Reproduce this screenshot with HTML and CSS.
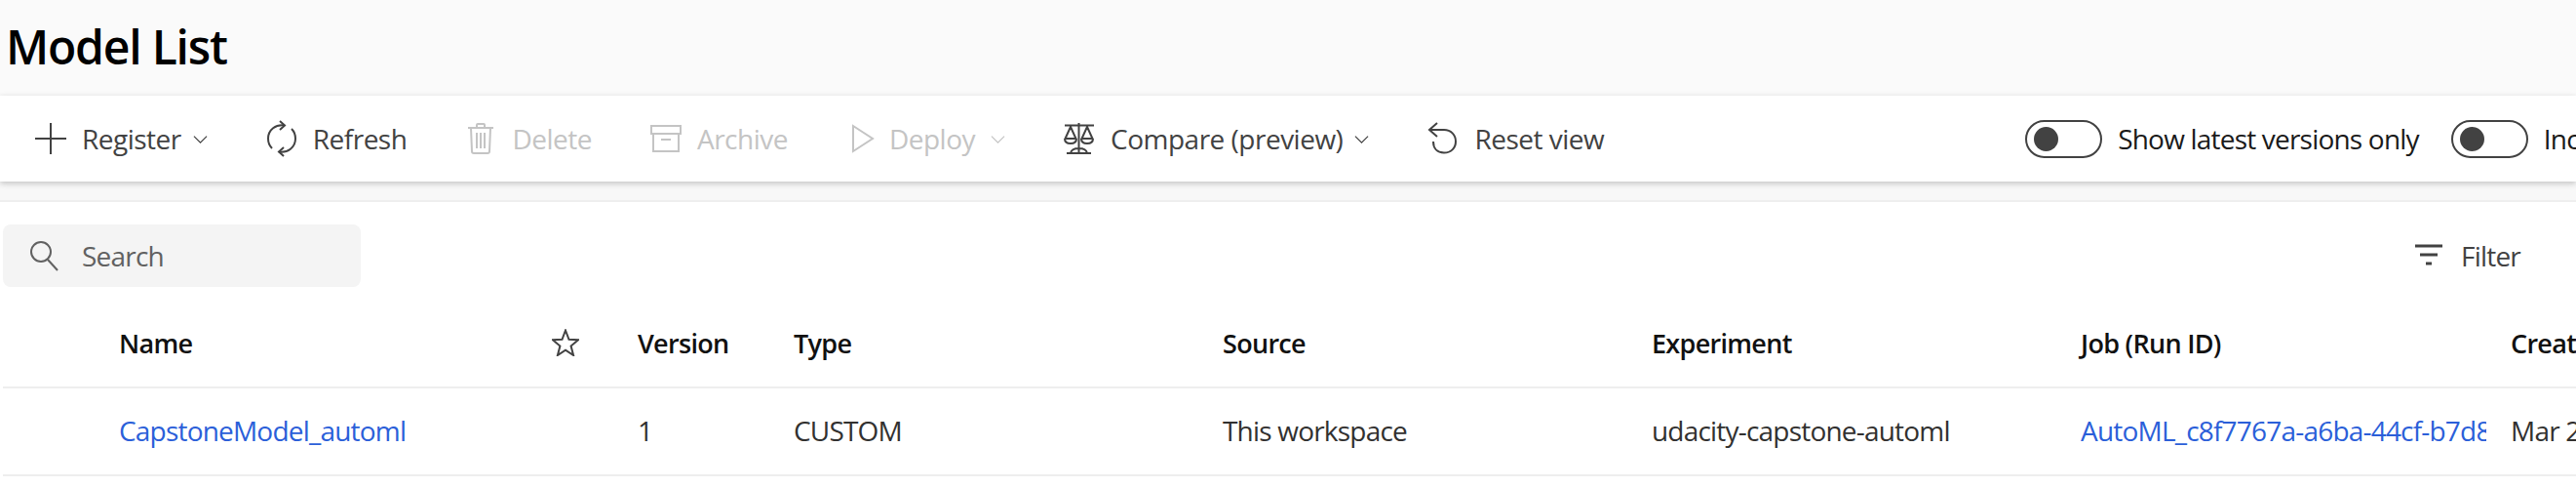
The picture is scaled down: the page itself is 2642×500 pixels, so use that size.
FILE: index.html
```html
<!DOCTYPE html>
<html lang="en">

<head>
  <meta charset="UTF-8">
  <title>Model List</title>
  <link rel="stylesheet" href="styles.css">
</head>

<body>
  <!-- Page title -->
  <div class="page-header">
    <h1 class="page-title">Model List</h1>
  </div>

  <!-- Command bar -->
  <div class="toolbar">
    <button class="tool-btn">
      <svg class="icon" viewBox="0 0 32 32"><path d="M16 0v32M0 16h32"/></svg>
      <span>Register</span>
      <svg class="chevron" viewBox="0 0 16 16"><path d="M1 5l7 7 7-7"/></svg>
    </button>
    <button class="tool-btn">
      <svg class="icon icon-tall" viewBox="0 0 32 38"><path d="M19 5.500C10 4 2 10 2 19c0 4 1.500 7.500 4 10"/><path d="M13 32.500C22 34 30 28 30 19c0-4-1.500-7.500-4-10"/><path d="M14 1l5 4.500-5 4.500M18 28l-5 4.500 5 4.500"/></svg>
      <span>Refresh</span>
    </button>
    <button class="tool-btn disabled">
      <svg class="icon" viewBox="0 0 32 32"><path d="M3 5h26M6 5l1 24q0 2 2 2h14q2 0 2-2l1-24M12 5V2q0-1 1-1h6q1 0 1 1v3M12 10v16M16 10v16M20 10v16"/></svg>
      <span>Delete</span>
    </button>
    <button class="tool-btn disabled">
      <svg class="icon" viewBox="0 0 32 32"><path d="M1 3h30v8H1zM3 11v18h26V11M11 17h10"/></svg>
      <span>Archive</span>
    </button>
    <button class="tool-btn disabled tight">
      <svg class="icon" viewBox="0 0 32 32"><path d="M7 3v26l20-13z"/></svg>
      <span>Deploy</span>
      <svg class="chevron" viewBox="0 0 16 16"><path d="M1 5l7 7 7-7"/></svg>
    </button>
    <button class="tool-btn">
      <svg class="icon" viewBox="0 0 32 32"><path d="M1 2.500h30M15.500 0v31M3 31h25M7 31q1-5 8.500-5t8.500 5M7 4L1.500 16h11zM24 4l-5.500 12h11zM1 16q0 5 6 5t6-5M18 16q0 5 6 5t6-5"/></svg>
      <span>Compare (preview)</span>
      <svg class="chevron" viewBox="0 0 16 16"><path d="M1 5l7 7 7-7"/></svg>
    </button>
    <button class="tool-btn">
      <svg class="icon" viewBox="0 0 32 32"><path d="M2 7h15c7 0 12 5 12 12s-5 11.500-12 11.500S6 26 6 19M10 0L2 7l8 7"/></svg>
      <span>Reset view</span>
    </button>

    <label class="toggle toggle-first"><span class="toggle-track"><span class="toggle-thumb"></span></span>Show latest versions only</label>
    <label class="toggle"><span class="toggle-track"><span class="toggle-thumb"></span></span>Include archived</label>
  </div>
  <div class="toolbar-gap"></div>

  <!-- Search + filter -->
  <div class="search-row">
    <div class="search-box">
      <svg class="search-icon" viewBox="0 0 32 32"><circle cx="13" cy="12" r="10"/><path d="M20 20l10 11"/></svg>
      <span>Search</span>
    </div>
    <div class="filter-btn">
      <svg class="filter-icon" viewBox="0 0 28 24"><path d="M0 2h28M5 11h18M11 20h6"/></svg>
      <span>Filter</span>
    </div>
  </div>

  <!-- Models table -->
  <div class="grid-row grid-head">
    <div class="cell cell-name">Name</div>
    <div class="cell"><svg class="star-icon" viewBox="0 0 28 28"><path d="M14 1.500l3.500 9.300 9.500.5-7.400 6.200 2.500 9.500-8.100-5.400-8.100 5.400 2.500-9.500L1 11.300l9.500-.5z"/></svg></div>
    <div class="cell">Version</div>
    <div class="cell">Type</div>
    <div class="cell">Source</div>
    <div class="cell">Experiment</div>
    <div class="cell">Job (Run ID)</div>
    <div class="cell">Created on</div>
  </div>
  <div class="grid-row">
    <div class="cell cell-name"><a class="link">CapstoneModel_automl</a></div>
    <div class="cell"></div>
    <div class="cell">1</div>
    <div class="cell">CUSTOM</div>
    <div class="cell">This workspace</div>
    <div class="cell">udacity-capstone-automl</div>
    <div class="cell"><a class="link link-clip">AutoML_c8f7767a-a6ba-44cf-b7d8-1f3e2a90</a></div>
    <div class="cell">Mar 2, 2023</div>
  </div>
</body>

</html>
```
FILE: styles.css
```css
/* General */
html,
body {
  margin: 0;
  padding: 0;
  height: 500px;
  overflow: hidden;
  background-color: white;
}

body {
  width: 2642px;
  font-family: "Open Sans", "Liberation Sans", sans-serif;
  font-size: 28px;
  letter-spacing: -0.8px;
  color: #323130;
}

/* Title */
.page-header {
  height: 98px;
  background-color: #fafafa;
  display: flex;
  align-items: center;
}

.page-title {
  margin: 0 0 4px 6px;
  font-size: 48px;
  font-weight: 600;
  letter-spacing: -1.2px;
  color: black;
}

/* Toolbar */
.toolbar {
  height: 88px;
  display: flex;
  align-items: center;
  gap: 60px;
  padding-left: 36px;
  background-color: white;
  box-shadow: 0 2px 6px rgba(0, 0, 0, 0.22);
  position: relative;
  white-space: nowrap;
}

.toolbar-gap {
  height: 19px;
  background-color: #f8f8f8;
  border-bottom: 2px solid #eeeeee;
}

.tool-btn {
  display: flex;
  align-items: center;
  gap: 16px;
  padding: 0;
  border: none;
  background: none;
  font: inherit;
  letter-spacing: -0.5px;
  font-weight: 500;
  color: #424242;
}

.tool-btn.disabled {
  color: #c4c4c4;
}

.tool-btn.tight {
  gap: 12px;
}

.icon {
  width: 32px;
  height: 32px;
  fill: none;
  stroke: currentColor;
  stroke-width: 2;
  overflow: visible;
}

.icon-tall {
  height: 38px;
}

.chevron {
  width: 15px;
  height: 15px;
  margin-left: -4px;
  fill: none;
  stroke: currentColor;
  stroke-width: 1.300;
}

.tight .chevron {
  margin-left: 4px;
}

/* Toggles */
.toggle {
  display: flex;
  align-items: center;
  gap: 16px;
  color: #1a1a1a;
  margin-left: -27px;
}

.toggle-first {
  margin-left: 372px;
}

.toggle-track {
  width: 79px;
  height: 39px;
  box-sizing: border-box;
  border: 2px solid #424242;
  border-radius: 20px;
  display: flex;
  align-items: center;
  padding-left: 7px;
}

.toggle-thumb {
  width: 25px;
  height: 25px;
  border-radius: 50%;
  background-color: #424242;
}

/* Search row */
.search-row {
  display: flex;
  justify-content: space-between;
  align-items: center;
  padding: 23px 57px 0 3px;
}

.search-box {
  width: 367px;
  height: 64px;
  box-sizing: border-box;
  padding-left: 26px;
  display: flex;
  align-items: center;
  gap: 23px;
  background-color: #f4f4f4;
  border-radius: 8px;
  color: #616161;
}

.search-icon {
  width: 32px;
  height: 32px;
  fill: none;
  stroke: #616161;
  stroke-width: 2;
}

.filter-btn {
  display: flex;
  align-items: center;
  gap: 19px;
  font-weight: 500;
  color: #424242;
}

.filter-icon {
  width: 28px;
  height: 24px;
  fill: none;
  stroke: #424242;
  stroke-width: 3;
}

/* Table */
.grid-row {
  display: grid;
  grid-template-columns: 444px 88px 160px 440px 440px 440px 441px 200px;
  align-items: center;
  height: 90px;
  margin-left: 3px;
  padding-left: 119px;
  padding-bottom: 2px;
  box-sizing: border-box;
  border-bottom: 2px solid #eeeeee;
  white-space: nowrap;
}

.grid-head {
  margin-top: 14px;
  font-size: 27px;
  letter-spacing: -0.7px;
  font-weight: 600;
  color: #111111;
}

.cell {
  min-width: 0;
}

.link {
  color: #2b5fd9;
}

.link-clip {
  display: block;
  width: 416px;
  overflow: hidden;
}

.star-icon {
  width: 28px;
  height: 28px;
  display: block;
  fill: none;
  stroke: #424242;
  stroke-width: 2;
}
```
